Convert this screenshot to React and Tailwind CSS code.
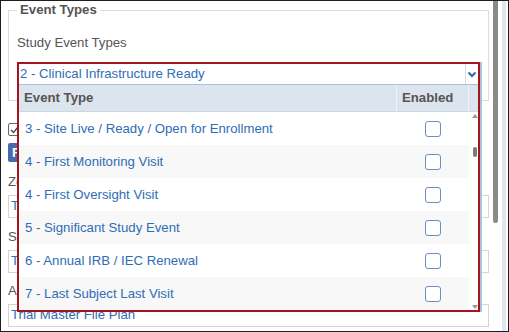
const eventTypes = [
  "3 - Site Live / Ready / Open for Enrollment",
  "4 - First Monitoring Visit",
  "4 - First Oversight Visit",
  "5 - Significant Study Event",
  "6 - Annual IRB / IEC Renewal",
  "7 - Last Subject Last Visit",
];

function Chevron() {
  return (
    <svg width="10" height="7" viewBox="0 0 10 7" className="block">
      <path d="M1.5 1.5 L5 5 L8.5 1.5" fill="none" stroke="#2f6db5" strokeWidth="2.2" />
    </svg>
  );
}

function EventDropdown() {
  return (
    <div className="absolute left-[16px] top-[61px] w-[463px] h-[250px] border-2 border-[#a3141c] bg-white shadow-[2px_0_0_#a9c1df] flex flex-col">
      <div className="h-[20px] flex items-center shrink-0">
        <div className="flex-1 pl-[1px] pb-[1px] text-[13.2px] leading-[16px] text-[#2f6db5] truncate">
          2 - Clinical Infrastructure Ready
        </div>
        <div className="w-[13px] h-full border-l border-[#dcdcdc] flex items-center justify-center">
          <Chevron />
        </div>
      </div>
      <div className="h-[28px] shrink-0 flex bg-[#dce4ee] border-t border-[#a9c1df] border-b border-b-[#cdd7e3]">
        <div className="flex-1 pl-[5px] flex items-center text-[13.2px] font-bold text-[#555]">Event Type</div>
        <div className="w-[72px] border-l border-[#f0f3f7] pl-[5px] flex items-center text-[13.2px] font-bold text-[#555]">
          Enabled
        </div>
        <div className="w-[10px] border-l border-[#f0f3f7]" />
      </div>
      <div className="flex-1 flex min-h-0">
        <div className="flex-1 flex flex-col">
          {eventTypes.map((name, i) => (
            <div
              key={name}
              className={`h-[33px] shrink-0 flex items-center ${i % 2 === 1 ? "bg-[#f8f8f8]" : "bg-white"}`}
            >
              <div className="flex-1 pl-[6px] text-[13.2px] text-[#2f6db5]">{name}</div>
              <div className="w-[72px] flex justify-center">
                <span className="block w-4 h-4 border-[1.5px] border-[#6d8fbf] rounded-[3px] bg-white" />
              </div>
            </div>
          ))}
        </div>
        <div className="w-[9px] relative bg-white">
          <span className="absolute left-[3px] top-[2px] w-0 h-0 border-l-[3px] border-r-[3px] border-b-[4px] border-l-transparent border-r-transparent border-b-[#999]" />
          <span className="absolute left-[4px] top-[35px] w-[4px] h-[10px] rounded-full bg-[#7a7a7a]" />
          <span className="absolute left-[3px] bottom-[1px] w-0 h-0 border-l-[3px] border-r-[3px] border-t-[4px] border-l-transparent border-r-transparent border-t-[#999]" />
        </div>
      </div>
    </div>
  );
}

function TextInput({ value }) {
  return (
    <div className="w-[481px] h-[23px] border border-[#d4d4d4] bg-white flex items-center pl-[2px] pb-[2px] text-[13.2px] text-[#2f6db5]">
      {value}
    </div>
  );
}

export default function App() {
  return (
    <div className="w-[509px] h-[332px] border border-[#1e1e1e] bg-white overflow-hidden flex font-['Liberation_Sans',Arial,sans-serif]">
      <div className="relative w-[490px] shrink-0 pl-[7px] pt-[1px]">
        <fieldset className="w-[481px] h-[99px] border border-[#dcdcdc] px-[8px]">
          <legend className="px-[3px] text-[13.2px] leading-[16px] font-bold text-[#555]">Event Types</legend>
          <div className="mt-[17px] text-[13.2px] leading-[16px] text-[#555]">Study Event Types</div>
        </fieldset>

        <div className="mt-[22px] w-[13px] h-[13px] border border-[#666] rounded-[2px] flex items-center justify-center">
          <svg width="9" height="8" viewBox="0 0 9 8">
            <path d="M1 4 L3.5 6.5 L8 1" fill="none" stroke="#444" strokeWidth="1.3" />
          </svg>
        </div>
        <div className="mt-[7px] w-[90px] h-[19px] rounded-[2px] bg-[#4a69ad] text-white text-[13.2px] font-bold leading-[19px] pl-[4px]">
          Filter
        </div>
        <div className="mt-[12px] text-[13.2px] leading-[16px] text-[#555]">Zone</div>
        <div className="mt-[5px]">
          <TextInput value="TMF Reference Model" />
        </div>
        <div className="mt-[11px] text-[13.2px] leading-[16px] text-[#555]">Section</div>
        <div className="mt-[5px]">
          <TextInput value="Trial Management" />
        </div>
        <div className="mt-[10px] text-[13.2px] leading-[16px] text-[#555]">Artifact</div>
        <div className="mt-[5px]">
          <TextInput value="Trial Master File Plan" />
        </div>

        <EventDropdown />
      </div>

      <div className="w-[11px] shrink-0 pl-[2px]">
        <div className="w-[5px] h-[222px] bg-[#8a8a8a] rounded-b-full" />
      </div>
      <div className="w-[4px] shrink-0 bg-[#dde6f1]" />
      <div className="w-[2px] shrink-0" />
    </div>
  );
}
